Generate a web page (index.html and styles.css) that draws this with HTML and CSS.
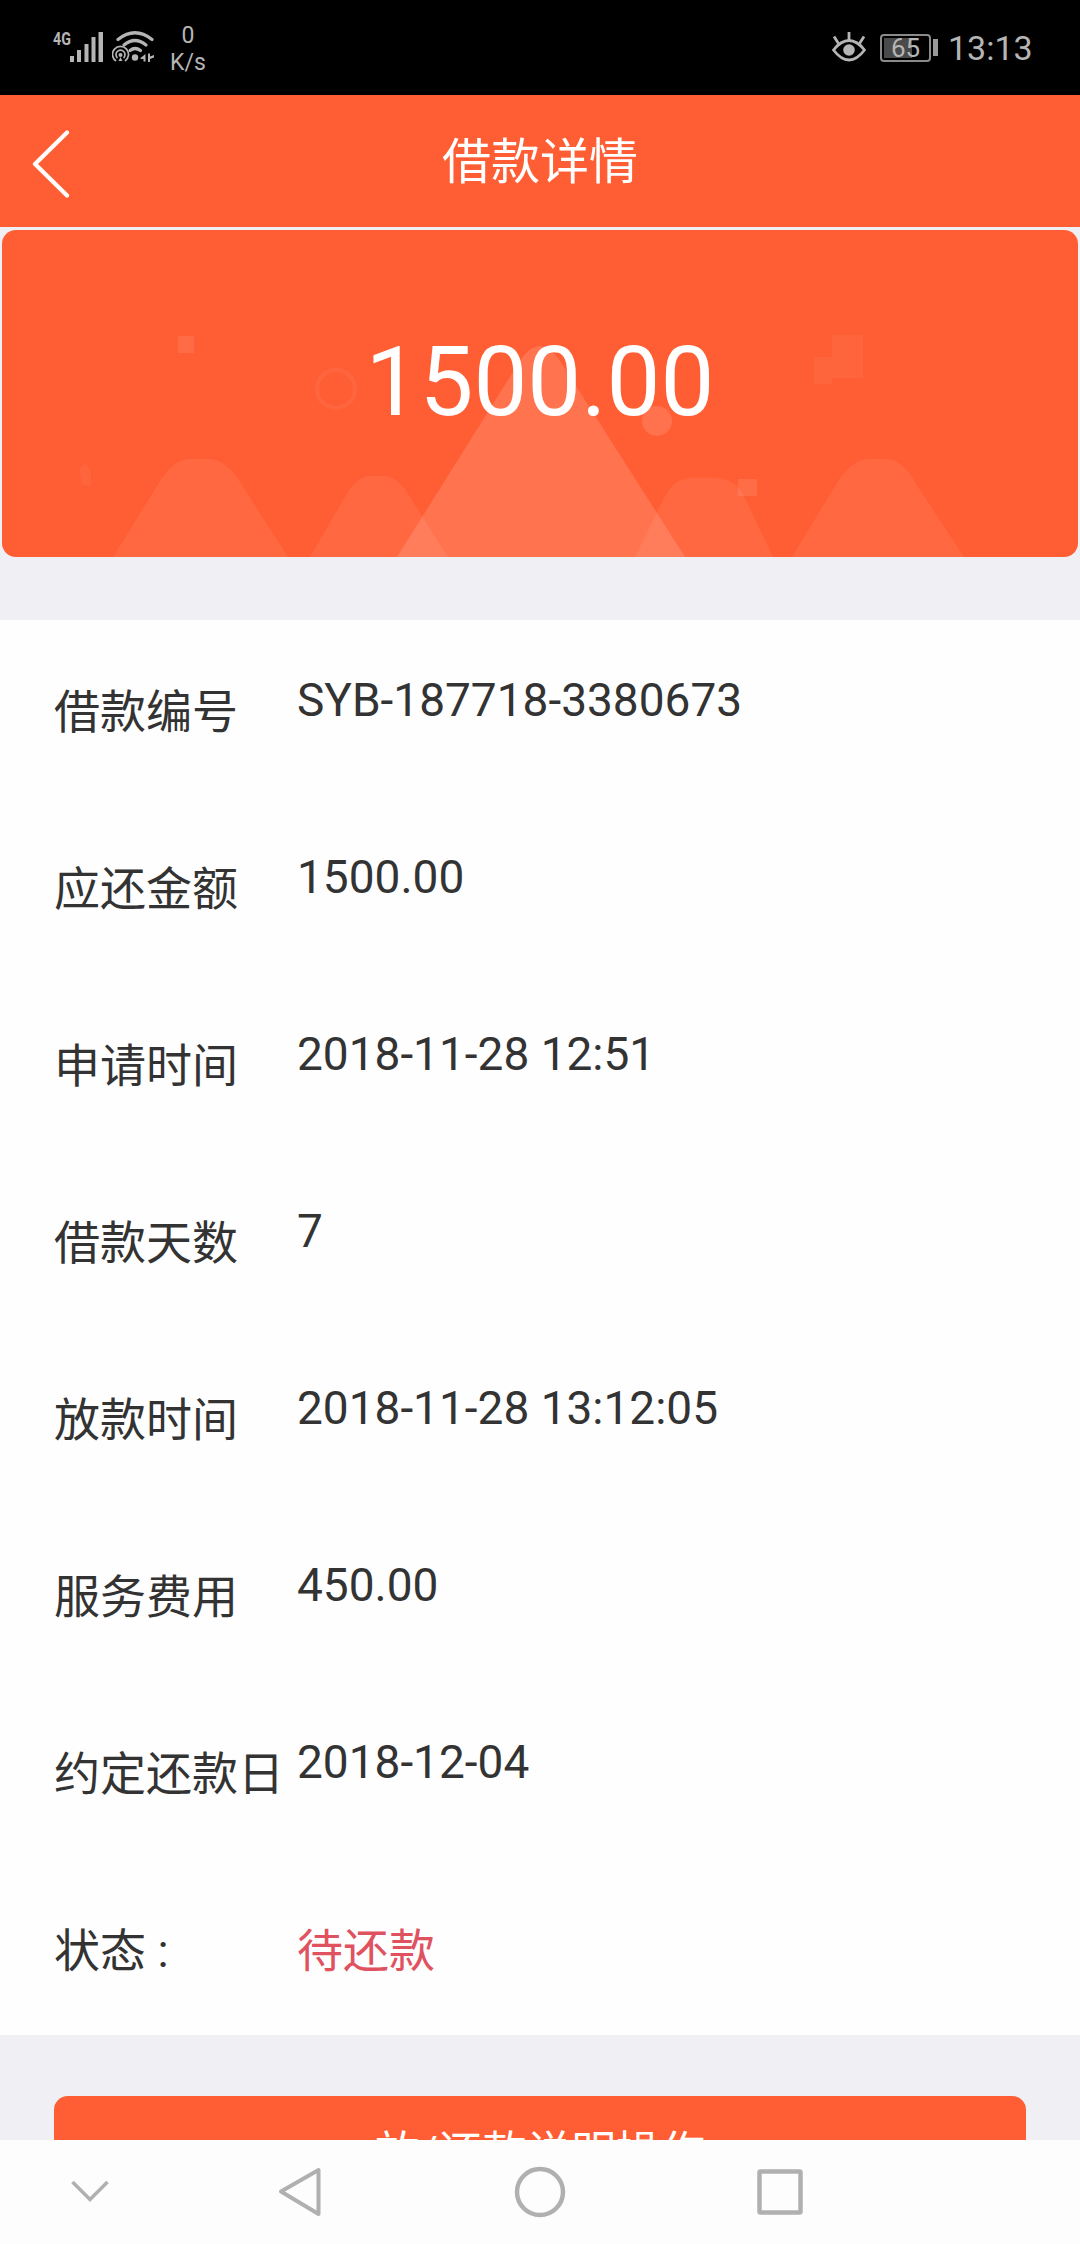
FILE: index.html
```
<!DOCTYPE html>
<html lang="zh-CN">
<head>
    <meta charset="UTF-8">
    <title>借款详情</title>
    <link rel="stylesheet" href="styles.css">
</head>
<body>
    <div class="status-bar">
        <span class="network">4G</span>
        <svg class="signal" width="34" height="30" viewBox="0 0 34 30">
            <path d="M0 24h4v6h-4zM7 18h4v12h-4zM14.500 12h4v18h-4zM21.500 5h4v25h-4zM28.500 0h4.500v30h-4.500z" fill="#b5b5b5"/>
        </svg>
        <svg class="wifi" width="44" height="32" viewBox="0 0 44 32">
            <g fill="none" stroke="#b5b5b5" stroke-width="3.200" stroke-linecap="round">
                <path d="M6 8.500Q23-5 40 8.500"/>
                <path d="M12 14Q23 5 34 14"/>
                <path d="M18 19.500Q23 15.500 28.500 19.500"/>
            </g>
            <circle cx="8.500" cy="23.500" r="9" fill="#000"/>
            <g fill="none" stroke="#b5b5b5" stroke-width="1.700">
                <path d="M4 30a8 8 0 1 1 9 0"/>
                <path d="M5.500 27a4.500 4.500 0 1 1 6 0"/>
            </g>
            <circle cx="8.500" cy="24" r="2" fill="#b5b5b5"/>
            <path d="M6.500 30l2-4 2 4z" fill="#b5b5b5"/>
            <circle cx="23" cy="26.500" r="3.200" fill="#b5b5b5"/>
            <path d="M28.500 27l5-4v7.500h-2v-2.500h-3zM36 22.500h2v3l4-1.500v2.500l-4 1.500v3h-2z" fill="#b5b5b5"/>
        </svg>
        <div class="speed">
            <span>0</span>
            <span>K/s</span>
        </div>
        <svg class="eye" width="34" height="30" viewBox="0 0 34 30">
            <g fill="none" stroke="#b5b5b5" stroke-width="2.800">
                <path d="M1.500 18Q9 8.500 17 8.500T32.500 18Q25 28 17 28T1.500 18z"/>
                <path d="M17 0v8M2 4.500l4.500 7M32 4.500l-4.500 7"/>
            </g>
            <circle cx="17" cy="18" r="5.800" fill="#b5b5b5"/>
        </svg>
        <div class="battery"><span class="battery-level">65</span></div>
        <div class="battery-tip"></div>
        <span class="clock">13:13</span>
    </div>

    <div class="header">
        <svg class="back" width="40" height="68" viewBox="0 0 40 68">
            <path d="M36 2.500L4 34l32 31.500" fill="none" stroke="#fff" stroke-width="4.200" stroke-linecap="round" stroke-linejoin="round"/>
        </svg>
        <h1>借款详情</h1>
    </div>

    <div class="content">
        <div class="card">
            <svg class="card-bg" width="1076" height="327" viewBox="2 230 1076 327">
                <g fill="#fff" fill-opacity="0.07">
                    <path d="M113 557L157 486Q172 459 190 459H208Q226 459 240 482L288 557z"/>
                    <path d="M310 557L345 497Q357 476 370 476H384Q398 476 410 497L448 557z"/>
                    <path d="M635 557L664 498Q674 478 690 478H716Q735 478 745 498L773 557z"/>
                    <path d="M792 557L834 488Q850 459 869 459H886Q903 459 916 484L964 557z"/>
                    <path d="M832 335h31v43h-31zM814 357h18v27h-18z" fill-opacity="0.05"/>
                    <path d="M178 336h16v17h-16z" fill-opacity="0.09"/>
                    <path d="M79 470l6-7 6 9v13h-9z" fill-opacity="0.05"/>
                    <path d="M738 479h19v17h-19z" fill-opacity="0.1"/>
                    <path d="M397 557L518 364Q540 328 562 364L685 557z" fill-opacity="0.14"/>
                    <circle cx="657" cy="421" r="15" fill-opacity="0.13"/>
                </g>
                <circle cx="336" cy="389" r="19" fill="none" stroke="#fff" stroke-opacity="0.06" stroke-width="4"/>
            </svg>
            <span class="amount">1500.00</span>
        </div>

        <div class="details">
            <div class="row">
                <span class="label">借款编号</span>
                <span class="value">SYB-187718-3380673</span>
            </div>
            <div class="row">
                <span class="label">应还金额</span>
                <span class="value">1500.00</span>
            </div>
            <div class="row">
                <span class="label">申请时间</span>
                <span class="value">2018-11-28 12:51</span>
            </div>
            <div class="row">
                <span class="label">借款天数</span>
                <span class="value">7</span>
            </div>
            <div class="row">
                <span class="label">放款时间</span>
                <span class="value">2018-11-28 13:12:05</span>
            </div>
            <div class="row">
                <span class="label">服务费用</span>
                <span class="value">450.00</span>
            </div>
            <div class="row">
                <span class="label">约定还款日</span>
                <span class="value">2018-12-04</span>
            </div>
            <div class="row">
                <span class="label">状态 :</span>
                <span class="value state">待还款</span>
            </div>
        </div>

        <button class="action" type="button">放/还款说明操作</button>
    </div>

    <div class="nav-bar">
        <svg width="1080" height="104" viewBox="0 0 1080 104">
            <g fill="none" stroke="#b0b0b0">
                <path d="M72.500 42L90 59.500L107.500 42" stroke-width="3.500"/>
                <path d="M281 51.500L318.500 30V74z" stroke-width="4" stroke-linejoin="round"/>
                <circle cx="540" cy="52" r="23" stroke-width="4.500"/>
                <rect x="759.500" y="31.500" width="41" height="41" rx="1" stroke-width="4.500"/>
            </g>
        </svg>
    </div>
</body>
</html>
```

FILE: styles.css
```
* {
    box-sizing: border-box;
}
body {
    margin: 0;
    height: 2244px;
    display: flex;
    flex-direction: column;
    overflow: hidden;
    background-color: #f0eff4;
    color: #333;
    font-family: Roboto, "Noto Sans CJK SC", sans-serif;
}

/* phone status bar */
.status-bar {
    flex: none;
    display: flex;
    align-items: flex-start;
    height: 95px;
    padding-left: 53px;
    background-color: #000;
    color: #b5b5b5;
}
.network {
    width: 17px;
    margin-top: 29px;
    font-size: 19px;
    font-weight: bold;
    line-height: 20px;
    transform: scaleX(0.75);
    transform-origin: left;
}
.signal {
    margin-top: 32px;
}
.wifi {
    margin-top: 31px;
    margin-left: 8px;
}
.speed {
    display: flex;
    flex-direction: column;
    align-items: center;
    width: 36px;
    margin-top: 22px;
    margin-left: 14px;
    font-size: 23px;
    line-height: 27px;
}
.eye {
    margin-top: 32px;
    margin-left: auto;
}
.battery {
    width: 51px;
    height: 28px;
    margin-top: 34px;
    margin-left: 14px;
    padding: 2px;
    border: 2px solid #8a8a8a;
    border-radius: 4px;
}
.battery-level {
    display: block;
    height: 20px;
    background: linear-gradient(to right, #4a4a4a 65%, #000 65%);
    font-size: 26px;
    line-height: 21px;
    text-align: center;
}
.battery-tip {
    width: 5px;
    height: 17px;
    margin-top: 39px;
    margin-left: 2px;
    background-color: #999;
}
.clock {
    width: 94px;
    margin-top: 28px;
    margin-right: 38px;
    margin-left: 10px;
    font-size: 34px;
    line-height: 40px;
}

/* page header */
.header {
    flex: none;
    display: grid;
    grid-template-columns: 80px 1fr 80px;
    height: 132px;
    background-color: #ff5d33;
    color: #fff;
}
.back {
    margin-top: 35px;
    margin-left: 31px;
}
h1 {
    margin: 0;
    padding-top: 3px;
    font-size: 49px;
    font-weight: normal;
    line-height: 129px;
    text-align: center;
}

.content {
    flex: 1;
    min-height: 0;
    overflow: hidden;
}
.card {
    position: relative;
    height: 327px;
    margin: 3px 2px 63px;
    border-radius: 14px;
    overflow: hidden;
    background-color: #ff5d33;
    color: #fff;
    text-align: center;
}
.card-bg {
    position: absolute;
    top: 0;
    left: 0;
}
.amount {
    position: relative;
    font-size: 96px;
    line-height: 304px;
}

.details {
    height: 1415px;
    background-color: #fefefe;
    font-size: 46px;
}
.row {
    display: grid;
    grid-template-columns: 243px 1fr;
    height: 177px;
    padding-left: 54px;
    line-height: 60px;
}
.label {
    padding-top: 62px;
    white-space: nowrap;
}
.value {
    padding-top: 50px;
}
.state {
    padding-top: 62px;
    color: #e05260;
}

.action {
    display: block;
    width: 972px;
    height: 104px;
    margin: 61px auto 0;
    padding: 0;
    border: none;
    border-radius: 14px;
    background-color: #ff5d33;
    color: #fff;
    font-family: inherit;
    font-size: 44.500px;
}

/* android buttons */
.nav-bar {
    flex: none;
    height: 104px;
    background-color: #fdfdfd;
}
```
